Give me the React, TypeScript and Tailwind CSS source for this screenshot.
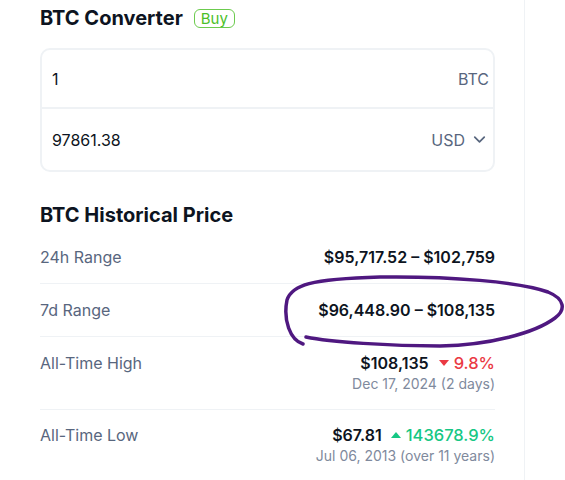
import { ChevronDown } from 'lucide-react';

function Row({ label, children, className = '' }: { label: string; children: React.ReactNode; className?: string }) {
  return (
    <div className={`flex justify-between border-b border-[#eff2f5] ${className}`}>
      <span className="text-[16px] leading-6 text-[#58667e]">{label}</span>
      <div className="flex flex-col items-end">{children}</div>
    </div>
  );
}

function Caret({ up }: { up?: boolean }) {
  return (
    <svg width="10" height="6" viewBox="0 0 10 6" className="mr-[5px]">
      {up ? <path d="M5 0 L10 6 L0 6 Z" fill="#16c784" /> : <path d="M0 0 L10 0 L5 6 Z" fill="#ea3943" />}
    </svg>
  );
}

export default function App() {
  return (
    <div className="relative w-[565px] h-[480px] bg-white overflow-hidden" style={{ fontFamily: 'Inter, "Noto Sans", sans-serif' }}>
      <div className="w-[525px] h-full border-r border-[#eff2f5] pl-10 pr-[29px] text-[#0d1421]">
        <div className="flex items-center gap-[11px] pt-[4px] h-[32px]">
          <h2 className="text-[20px] font-bold leading-7">BTC Converter</h2>
          <span className="text-[15px] leading-[17px] text-[#4cbf2a] border border-[#6ccb4e] rounded-[6px] px-[6px] mt-[1px]">Buy</span>
        </div>

        <div className="mt-4 border-2 border-[#eff2f5] rounded-[10px]">
          <div className="flex items-center justify-between h-[59px] pl-[10px] pr-[4px] border-b-2 border-[#eff2f5]">
            <span className="text-[16px]">1</span>
            <span className="text-[16px] text-[#58667e]">BTC</span>
          </div>
          <div className="flex items-center justify-between h-[61px] pl-[10px] pr-[4px]">
            <span className="text-[16px]">97861.38</span>
            <span className="flex items-center gap-[5px] text-[16px] text-[#58667e]">
              USD
              <ChevronDown size={19} strokeWidth={2.2} />
            </span>
          </div>
        </div>

        <h3 className="mt-[29px] text-[20px] font-bold leading-7">BTC Historical Price</h3>

        <div>
          <Row label="24h Range" className="pt-[16px] h-[55px]">
            <span className="text-[16px] leading-6 font-semibold">$95,717.52 – $102,759</span>
          </Row>
          <Row label="7d Range" className="pt-[14px] h-[53px]">
            <span className="text-[16px] leading-6 font-semibold">$96,448.90 – $108,135</span>
          </Row>
          <Row label="All-Time High" className="pt-[14px] h-[73px]">
            <span className="flex items-center text-[16px] leading-6 font-semibold">
              $108,135
              <span className="ml-[10px] flex items-center text-[16.5px] text-[#ea3943] font-medium">
                <Caret />
                9.8%
              </span>
            </span>
            <span className="text-[14px] leading-5 text-[#808a9d] -mt-[1px]">Dec 17, 2024 (2 days)</span>
          </Row>
          <Row label="All-Time Low" className="pt-[13px] border-b-0">
            <span className="flex items-center text-[16px] leading-6 font-semibold">
              $67.81
              <span className="ml-[9px] flex items-center text-[16.5px] text-[#16c784] font-medium">
                <Caret up />
                143678.9%
              </span>
            </span>
            <span className="text-[14px] leading-5 text-[#808a9d] -mt-[1px]">Jul 06, 2013 (over 11 years)</span>
          </Row>
        </div>
      </div>

      <svg className="absolute left-0 top-0 pointer-events-none" width="565" height="480">
        <path
          d="M303 344 C290 340, 283 320, 287 300 C292 285, 310 279, 380 277 C450 276, 520 282, 548 292 C565 299, 566 310, 555 318 C535 333, 490 345, 440 346 C390 346, 330 342, 306 337"
          fill="none"
          stroke="#4f1880"
          strokeWidth="3.5"
          strokeLinecap="round"
        />
      </svg>
    </div>
  );
}
